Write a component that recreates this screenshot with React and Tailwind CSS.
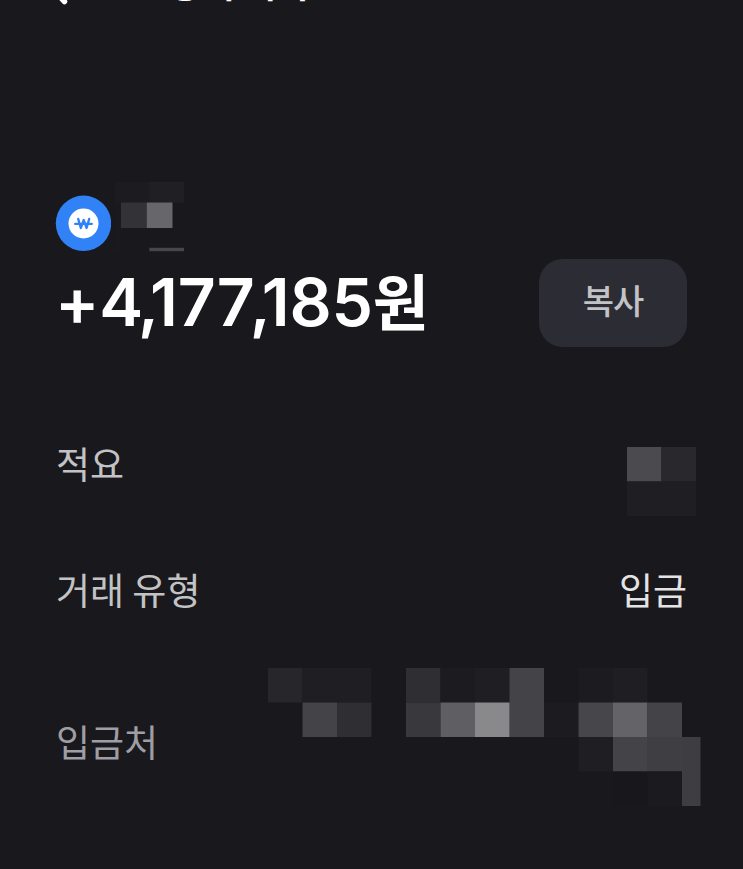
const NAME_BLOCKS = [
    [115, 182, 34.3, 20.5, '#1c1c20'],
    [149.3, 182, 34.7, 20.5, '#202024'],
    [115, 202.5, 6, 48.5, '#1a1a1e'],
    [121, 202.5, 25.7, 25.5, '#333337'],
    [146.7, 202.5, 25.8, 25.5, '#67676b'],
    [149.3, 247.8, 34.7, 3.4, '#47474b'],
];

const MEMO_BLOCKS = [
    [627, 447, 34.5, 34.5, '#4b4b4f'],
    [661.5, 447, 34.5, 34.5, '#29292d'],
    [627, 481.5, 69, 34.5, '#1f1f23'],
];

const SOURCE_BLOCKS = [
    [268, 668, 34.5, 34.5, '#27272b'],
    [302.5, 668, 69, 34.5, '#1f1f23'],
    [406, 668, 34.5, 34.5, '#2f2f33'],
    [440.5, 668, 34.5, 34.5, '#1c1c20'],
    [475, 668, 34.5, 34.5, '#1f1f23'],
    [509.5, 668, 34.5, 69, '#444448'],
    [578.5, 668, 34.5, 34.5, '#1c1c20'],
    [613, 668, 34.5, 34.5, '#1f1f23'],
    [302.5, 702.5, 34.5, 34.5, '#444448'],
    [337, 702.5, 34.5, 34.5, '#2f2f33'],
    [406, 702.5, 34.5, 34.5, '#39393d'],
    [440.5, 702.5, 34.5, 34.5, '#5f5f63'],
    [475, 702.5, 34.5, 34.5, '#89898b'],
    [544, 702.5, 34.5, 34.5, '#1c1c20'],
    [578.5, 702.5, 34.5, 34.5, '#47474b'],
    [613, 702.5, 34.5, 34.5, '#646468'],
    [647.5, 702.5, 34.5, 34.5, '#444448'],
    [578.5, 737, 34.5, 34.5, '#1f1f23'],
    [613, 737, 34.5, 34.5, '#444448'],
    [647, 737, 35, 34.5, '#3f3f43'],
    [613, 771.5, 34.5, 34.5, '#18181c'],
    [647.5, 771.5, 34.5, 34.5, '#1b1b1f'],
    [682, 737, 18.5, 69, '#3e3e42'],
];

const Mosaic = ({ blocks, viewBox, className }) => (
    <svg viewBox={viewBox} className={className} aria-hidden="true">
        {blocks.map(([x, y, w, h, fill]) => <rect key={`${x}-${y}`} x={x} y={y} width={w} height={h} fill={fill} />)}
    </svg>
);

const WonIcon = () => (
    <svg viewBox="0 0 56 56" className="size-14 shrink-0" fill="none">
        <circle cx="28.5" cy="28.3" r="27.7" fill="#3182f6" />
        <circle cx="28.5" cy="28.5" r="15" fill="#fff" />
        <path d="M23.2 23.9 25.8 33 28.7 25 31.6 33 34.2 23.9M20.2 28.9h16.6" stroke="#3182f6" strokeWidth="2.3" strokeLinecap="round" strokeLinejoin="round" />
    </svg>
);

const Comma = () => <span className="-ml-[5px] tracking-[-9px]">,</span>;

const Row = ({ label, className, labelClass, children }) => (
    <div className={`flex justify-between ${className}`}>
        <span className={`text-[37px] leading-[44px] whitespace-nowrap pl-px ${labelClass}`}>{label}</span>
        {children}
    </div>
);

export default function App() {
    return (
        <main className="h-[869px] w-[743px] overflow-hidden bg-[#19191d] pl-[55px] font-['Noto_Sans_CJK_KR',sans-serif] text-white">
            <header className="flex h-[182px] items-start">
                <svg viewBox="0 0 24 40" className="-mt-[35px] h-10 w-6 shrink-0" fill="none">
                    <path d="M-6 20 9.5 36.5" stroke="#fff" strokeWidth="5.5" strokeLinecap="round" />
                </svg>
                <h1 className="-mt-[40px] ml-[89px] text-[36px] leading-[44px] font-bold whitespace-nowrap">상세 내역</h1>
            </header>

            <div className="flex h-[70px] items-start">
                <div className="pt-[13px]"><WonIcon /></div>
                <Mosaic blocks={NAME_BLOCKS} viewBox="115 182 69 70" className="ml-1 h-[70px] w-[69px]" />
            </div>

            <section className="flex h-[195px] w-[632px] items-start justify-between pt-[6px]">
                <div className="flex items-baseline pt-[2px] leading-[80px] whitespace-nowrap">
                    <span className="font-['Inter'] text-[66px] font-semibold tracking-[-0.2px]">+4<Comma />177<Comma />185</span>
                    <span className="text-[61px] font-bold">원</span>
                </div>
                <button className="mt-[0.5px] h-[88.5px] w-[148px] rounded-[24px] bg-[#2c2c35] pb-[6px] text-[34px] font-medium tracking-[-1px] text-[#c3c3c6]">복사</button>
            </section>

            <Row label="적요" className="h-[126px] w-[641px]" labelClass="-mt-[6px] text-[#c3c3c6]">
                <Mosaic blocks={MEMO_BLOCKS} viewBox="627 447 69 69" className="size-[69px]" />
            </Row>
            <Row label="거래 유형" className="h-[95px] w-[632px]" labelClass="-mt-[6px] text-[#c3c3c6]">
                <span className="-mt-[6px] text-[37px] leading-[44px] text-[#e4e4e5]">입금</span>
            </Row>
            <Row label="입금처" className="w-[646px]" labelClass="pt-[51px] text-[#9e9ea4]">
                <Mosaic blocks={SOURCE_BLOCKS} viewBox="268 668 433 138" className="h-[138px] w-[433px]" />
            </Row>
        </main>
    );
}
